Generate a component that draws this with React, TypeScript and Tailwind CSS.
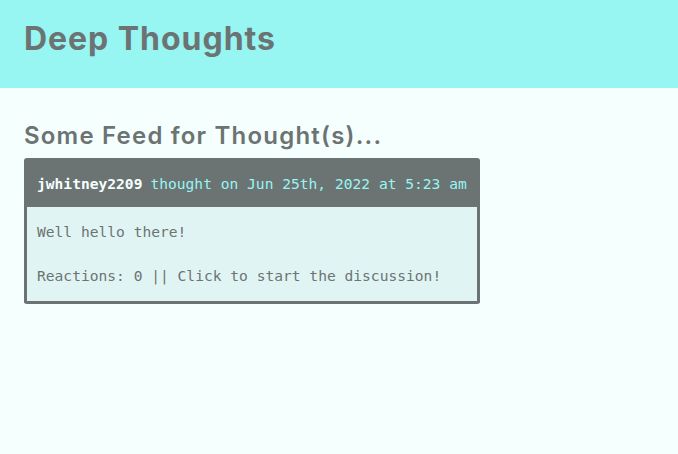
export default function App() {
  return (
    <div className="min-h-[454px] bg-[#f5fffe] font-['Inter',sans-serif]">
      <header className="flex h-[88px] items-start bg-[#97f6f2] px-6 pt-[23px]">
        <h1 className="text-[32px] font-bold leading-none tracking-[0.03em] text-[#6c7373]">
          Deep Thoughts
        </h1>
      </header>
      <main className="px-6 pt-[34px]">
        <h3 className="text-[24px] font-semibold leading-[28px] tracking-[0.05em] text-[#6c7373]">
          Some Feed for Thought(s)...
        </h3>
        <div className="mt-[8px] w-[456px] overflow-hidden rounded-[3px] border-[3px] border-t-0 border-[#6c7373] font-['DejaVu_Sans_Mono',monospace] text-[14.6px]">
          <p className="flex h-[49px] items-center bg-[#6c7373] px-[10px] pt-[3px]">
            <span className="font-bold text-[#f5fffe]">jwhitney2209</span>
            <span className="ml-[8px] text-[#97f6f2]">
              thought on Jun 25th, 2022 at 5:23 am
            </span>
          </p>
          <div className="bg-[#e0f5f3] px-[10px] pb-[15px] pt-[15px] leading-[20px] text-[#6c7373]">
            <p>Well hello there!</p>
            <p className="mt-[24px]">
              Reactions: 0 || Click to start the discussion!
            </p>
          </div>
        </div>
      </main>
    </div>
  );
}
